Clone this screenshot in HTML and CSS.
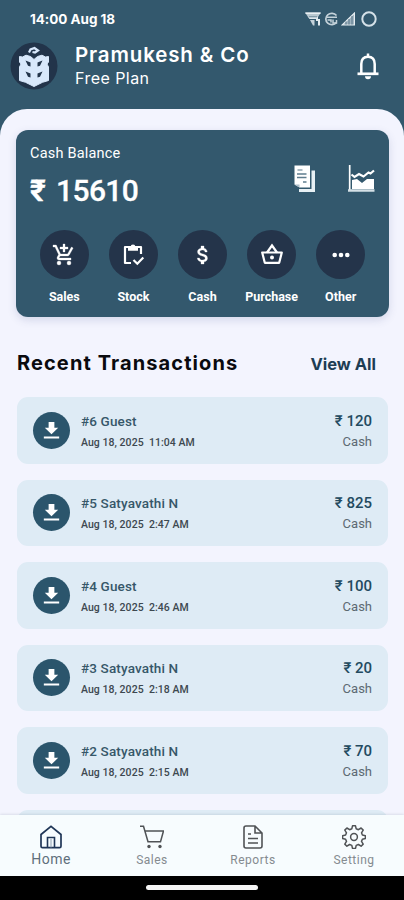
FILE: index.html
```html
<!DOCTYPE html>
<html lang="en">
<head>
<meta charset="utf-8">
<meta name="viewport" content="width=device-width, initial-scale=1">
<title>Pramukesh &amp; Co</title>
<link rel="stylesheet" href="styles.css">
</head>
<body>
<svg class="defs" aria-hidden="true">
  <symbol id="download" viewBox="0 0 24 24"><path fill="currentColor" d="M19 9h-4V3H9v6H5l7 7 7-7zM4 18.2v2.2h16v-2.2z"/></symbol>
</svg>
<div class="app">
  <header class="top">
    <div class="status">
      <span class="clock">14:00 Aug 18</span>
      <div class="signals">
        <svg width="16" height="14" viewBox="0 0 16 14"><path d="M0 .5h16l-3 4.500H3z" fill="#b9c8d0"/><path d="M.5 1.200h15" stroke="#eef3f6" stroke-width="1.400"/><path d="M3 5h10v2H4.500z" fill="#dfe8ed"/><path d="M5 8h4.500v5.500H8z" fill="#c5d2da"/><path d="M11 7h4v6.500h-2V9h-2z" fill="#e4ecf0"/><path d="M4 4.800h8" stroke="#6b8899"/></svg>
        <svg width="14" height="14" viewBox="0 0 14 14" fill="none" stroke="#c4d2da" stroke-width="1.700"><path d="M12.500 3.500A6 5.600 0 1 0 12.500 10.500"/><path d="M3 5.300h10M3.500 8h3.500v2.500M9 7.500v3.500h3.500V8" stroke-width="1.500"/></svg>
        <svg width="14" height="14" viewBox="0 0 14 14"><path d="M13.500 1v12H1z" fill="#9fb3bf" stroke="#e6edf1" stroke-width="1.200"/><path d="M5 9.500v3M8 7v5.500M11 4v8.500" stroke="#58778a"/></svg>
        <svg class="ring" width="16" height="16" viewBox="0 0 16 16"><circle cx="8" cy="8" r="6.700" fill="none" stroke="#d5e1e8" stroke-width="2"/></svg>
      </div>
    </div>
    <div class="account">
      <svg class="logo" viewBox="0 0 48 48"><circle cx="24" cy="24" r="23.500" fill="#22344a"/><path fill="#d8e8fb" stroke="#d8e8fb" stroke-width="1" stroke-linejoin="round" d="m24 17.500-3.500-3-4.500-1.300-3.500 1.800-3-.5v5.500l1.500 2-1.500 3v13.500l6 1.800L24 44.500l8.500-4.200 6-1.800V25L37 22l1.500-2v-5.500l-3 .5-3.500-1.800-4.500 1.300z"/><path fill="none" stroke="#d8e8fb" stroke-width="2.200" d="m19 10.500 1.500-3 4-1.500 3.500 2.500-3 2-2.500-.500"/><g fill="#22344a"><path d="m15.500 18.500 5 2v4l-2.500-.7zM32.500 18.500l-5 2v4l2.500-.7zM15.500 29.500l5 2v4l-2.500-.7zM32.500 29.500l-5 2v4l2.500-.7z"/></g></svg>
      <div class="who">
        <h1>Pramukesh &amp; Co</h1>
        <p>Free Plan</p>
      </div>
      <svg class="bell" viewBox="0 0 24 28" fill="none" stroke="#fff" stroke-width="2.500"><path d="M5.300 21V12c0-4.700 2.700-7.300 6.700-7.300s6.700 2.600 6.700 7.300v9"/><path d="M1.500 21.800h21" stroke-width="2.700"/><path d="M12 1.500v3"/><path d="M9 24.300h6a3 3 0 0 1-6 0z" fill="#fff" stroke="none"/></svg>
    </div>
  </header>

  <main class="sheet">
    <section class="card">
      <div class="balance">
        <div>
          <p class="caption">Cash Balance</p>
          <p class="amount"><span class="rupee">₹</span>15610</p>
        </div>
        <div class="tools">
          <svg width="21" height="28" viewBox="0 0 21 28"><path fill="#e8f0f4" d="M17.500 5.500H21V27H5V24h12.500z"/><path fill="#fff" d="M.5.500h15.500v22H5.500l-5-3z"/><path d="M3.500 5h5" stroke="#8fa5b1" stroke-width="1.300"/><path d="M3 9h9.500M3 12.500h9.500M9 17h3.500" stroke="#5f7d8e" stroke-width="1.500"/><path d="M.5 19.500h5v3z" fill="#a9bcc7"/></svg>
          <svg width="27" height="28" viewBox="0 0 27 28"><path d="M1.700 0v25" stroke="#fff" stroke-width="1.700"/><path d="M0 25.500h26.500" stroke="#d5e0e6" stroke-width="2.600"/><path fill="#fff" d="m4 15 5-1 5 4 5-4h7v10H4z"/><path fill="none" stroke="#fff" stroke-width="2.200" d="m3.500 9.500 3 2.500 4.500-3 4.500 2.500 5-4 2 1L26 5.500"/></svg>
        </div>
      </div>
      <nav class="actions">
        <a><i><svg viewBox="0 0 24 24" fill="currentColor" stroke="currentColor" stroke-width=".3"><path d="M11 9h2V6h3V4h-3V1h-2v3H8v2h3zM7 18a2 2 0 1 0 0 4 2 2 0 0 0 0-4m10 0a2 2 0 1 0 0 4 2 2 0 0 0 0-4M8.100 13h7.450c.75 0 1.410-.410 1.750-1.030L21.160 5l-1.740-1-3.870 7H8.530L4.270 2H1v2h2l3.600 7.590-1.350 2.440C4.520 15.370 5.480 17 7 17h12v-2H7z"/></svg></i>Sales</a>
        <a><i><svg viewBox="0 0 24 24" fill="none" stroke="currentColor" stroke-width="2.200"><path d="M10 20H4V4h16v7" stroke-linejoin="round"/><path d="M7 4h10v3.800H7z" fill="currentColor" stroke="none"/><circle cx="12" cy="3.700" r="2.300" fill="currentColor" stroke="none"/><path d="m12.500 17 3.800 3.700 6-6.200"/></svg></i>Stock</a>
        <a><i><svg viewBox="0 0 24 24" fill="currentColor" stroke="currentColor" stroke-width=".3"><path d="M11.800 10.900c-2.270-.590-3-1.200-3-2.150 0-1.090 1.010-1.850 2.700-1.850 1.780 0 2.440.850 2.500 2.100h2.210c-.070-1.720-1.120-3.300-3.210-3.810V3h-3v2.160c-1.940.420-3.500 1.680-3.500 3.610 0 2.310 1.910 3.460 4.700 4.130 2.500.600 3 1.480 3 2.410 0 .690-.490 1.790-2.700 1.790-2.060 0-2.870-.920-2.980-2.100h-2.200c.120 2.190 1.760 3.420 3.680 3.830V21h3v-2.150c1.950-.370 3.500-1.500 3.500-3.550 0-2.840-2.430-3.810-4.700-4.400"/></svg></i>Cash</a>
        <a><i><svg viewBox="0 0 24 24" fill="none" stroke="currentColor" stroke-width="2.200"><path d="M2.200 9.500h19.600l-2.600 10.300H4.800z" stroke-linejoin="round"/><path d="m7 9.500 5-7 5 7"/><circle cx="12" cy="14.500" r="2" fill="currentColor" stroke="none"/></svg></i>Purchase</a>
        <a><i><svg viewBox="0 0 24 24" fill="currentColor"><circle cx="5.700" cy="12" r="2.300"/><circle cx="12" cy="12" r="2.300"/><circle cx="18.300" cy="12" r="2.300"/></svg></i>Other</a>
      </nav>
    </section>

    <div class="heading"><h2>Recent Transactions</h2><a>View All</a></div>

    <ul class="list">
      <li><span class="badge"><svg><use href="#download"/></svg></span><div class="info"><b>#6 Guest</b><small>Aug 18, 2025&nbsp; 11:04 AM</small></div><div class="sum"><b>₹ 120</b><small>Cash</small></div></li>
      <li><span class="badge"><svg><use href="#download"/></svg></span><div class="info"><b>#5 Satyavathi N</b><small>Aug 18, 2025&nbsp; 2:47 AM</small></div><div class="sum"><b>₹ 825</b><small>Cash</small></div></li>
      <li><span class="badge"><svg><use href="#download"/></svg></span><div class="info"><b>#4 Guest</b><small>Aug 18, 2025&nbsp; 2:46 AM</small></div><div class="sum"><b>₹ 100</b><small>Cash</small></div></li>
      <li><span class="badge"><svg><use href="#download"/></svg></span><div class="info"><b>#3 Satyavathi N</b><small>Aug 18, 2025&nbsp; 2:18 AM</small></div><div class="sum"><b>₹ 20</b><small>Cash</small></div></li>
      <li><span class="badge"><svg><use href="#download"/></svg></span><div class="info"><b>#2 Satyavathi N</b><small>Aug 18, 2025&nbsp; 2:15 AM</small></div><div class="sum"><b>₹ 70</b><small>Cash</small></div></li>
      <li></li>
    </ul>
  </main>

  <nav class="tabs">
    <a class="active"><svg viewBox="0 0 24 24" fill="none" stroke="currentColor" stroke-width="1.700"><path d="M2 9.500 12 1.300l10 8.200v11.700a1.500 1.500 0 0 1-1.500 1.500h-17A1.500 1.500 0 0 1 2 21.200z"/><path d="M8.500 22.500v-10h7v10" stroke-width="1.600"/><path d="M12 14v8.500" stroke-width="1" stroke="#8fa0b0"/></svg><span>Home</span></a>
    <a><svg viewBox="0 0 24 24" fill="none" stroke="currentColor" stroke-width="1.500"><path d="M0 1.200h3.500L8 16.800h12.500L23.500 6H5"/><circle cx="9" cy="21.500" r="1.700" fill="currentColor" stroke="none"/><circle cx="20" cy="21.500" r="1.700" fill="currentColor" stroke="none"/></svg><span>Sales</span></a>
    <a><svg viewBox="0 0 24 24" fill="none" stroke="currentColor" stroke-width="1.600"><path d="M14 1H5a2 2 0 0 0-2 2v18a2 2 0 0 0 2 2h14a2 2 0 0 0 2-2V8zM14 1v7h7M7 9h3M7 13.500h10M7 18h10"/></svg><span>Reports</span></a>
    <a><svg viewBox="0 0 24 24" fill="none" stroke="currentColor" stroke-width="1.500" stroke-linejoin="round"><path d="M9.800 3.800 10.500.8h3l.7 3 2.200.9 2.700-1.700 2.100 2.100-1.700 2.700.9 2.200 3 .700v2.800l-3 .7-.9 2.200 1.700 2.700-2.100 2.100-2.700-1.700-2.200.9-.7 3h-3l-.7-3-2.200-.9-2.700 1.700-2.100-2.100 1.700-2.700-.9-2.200-3-.7v-2.800l3-.7.9-2.200-1.700-2.700L4.900 3l2.700 1.700z"/><circle cx="12" cy="12" r="3.400"/></svg><span>Setting</span></a>
  </nav>
  <footer class="gesture"><span></span></footer>
</div>
</body>
</html>
```
FILE: styles.css
```css
* { box-sizing: border-box; margin: 0; padding: 0; }
body { background: #33586d; font-family: Roboto, "Noto Sans", sans-serif; }
.defs { display: none; }
svg { display: block; flex: none; }
.app { width: 404px; height: 900px; display: flex; flex-direction: column; overflow: hidden; }

.top { height: 109px; flex: none; color: #fff; font-family: Inter, sans-serif; }
.status { height: 37px; padding: 0 27px 0 30px; display: flex; align-items: center; justify-content: space-between; }
.clock { font-size: 13.500px; font-weight: 700; letter-spacing: -.05px; }
.signals { display: flex; align-items: center; gap: 3px; }
.ring { margin-left: 3px; }
.account { height: 58px; padding: 0 24px 0 10px; display: flex; align-items: center; }
.logo { width: 48px; height: 48px; }
.who { margin-left: 17px; flex: 1; }
.who h1 { font-size: 20.500px; line-height: 24px; font-weight: 600; letter-spacing: .85px; }
.who p { font-size: 16px; line-height: 22px; letter-spacing: .45px; }
.bell { width: 24px; height: 28px; }

.sheet { flex: 1; min-height: 0; overflow: hidden; background: #f3f4fe; border-radius: 27px 27px 0 0; padding: 21px 16px 0; }
.card { width: 373px; height: 187px; border-radius: 12px; background: #33586d; color: #fff; padding: 14px 14px 0; box-shadow: 0 3px 9px rgba(60, 70, 130, .17); }
.balance { display: flex; justify-content: space-between; height: 86px; }
.caption { font-size: 14.500px; line-height: 20px; letter-spacing: .2px; }
.amount { font-size: 30px; line-height: 36px; margin-top: 9px; font-weight: 500; display: flex; letter-spacing: -.6px; -webkit-text-stroke: .3px #fff; }
.rupee { width: 26px; font-weight: 700; }
.tools { display: flex; gap: 33px; padding-top: 21px; }
.actions { display: grid; grid-template-columns: repeat(5, 69.100px); justify-content: center; }
.actions a { display: flex; flex-direction: column; align-items: center; font-size: 12.500px; line-height: 16px; font-weight: 700; gap: 10px; }
.actions i { width: 49px; height: 49px; border-radius: 50%; background: #24344a; display: grid; place-items: center; }
.actions svg { width: 24px; height: 24px; }

.heading { height: 80px; padding: 12px 12px 0 1px; display: flex; align-items: center; justify-content: space-between; font-family: Inter, sans-serif; }
.heading h2 { font-size: 20px; font-weight: 700; color: #0a0a0e; letter-spacing: 1.100px; }
.heading a { font-size: 16.500px; font-weight: 700; color: #1d3d54; padding-top: 2px; }

.list { list-style: none; display: grid; gap: 16px; padding: 0 0 0 1px; }
.list li { width: 371px; height: 66.500px; border-radius: 11px; background: #deebf5; display: flex; align-items: center; padding: 0 16px; }
.badge { width: 37px; height: 37px; border-radius: 50%; background: #2b556c; color: #fff; display: grid; place-items: center; }
.badge svg { width: 23px; height: 23px; }
.info, .sum { display: flex; flex-direction: column; padding-top: 3px; }
.info { flex: 1; margin-left: 11px; gap: 2px; }
.info b { font-size: 13.500px; line-height: 19px; font-weight: 500; letter-spacing: .15px; color: #365769; }
.info small { font-size: 10.500px; line-height: 19px; font-weight: 500; letter-spacing: .05px; color: #3d4850; }
.sum { align-items: flex-end; gap: 1px; padding-top: 2px; }
.sum b { font-size: 15px; line-height: 20px; font-weight: 500; color: #234a60; }
.sum small { font-size: 13px; line-height: 20px; color: #5c6972; }

.tabs { flex: none; height: 61px; background: #f7fcfe; display: grid; grid-template-columns: repeat(4, 1fr); box-shadow: 0 -1px 2px rgba(60, 80, 100, .12); position: relative; }
.tabs a { display: flex; flex-direction: column; align-items: center; padding: 10px 0 0 1px; color: #505356; }
.tabs svg { width: 24px; height: 24px; }
.tabs span { font-size: 12px; line-height: 16px; margin-top: 3px; letter-spacing: .5px; color: #858b90; }
.tabs .active { color: #203657; }
.tabs .active span { font-size: 14px; margin-top: 2px; color: #5f6f7c; }
.gesture { flex: none; height: 24px; background: #000; display: flex; justify-content: center; padding-top: 9px; }
.gesture span { width: 112px; height: 5px; border-radius: 3px; background: #f5f5f5; }
```
